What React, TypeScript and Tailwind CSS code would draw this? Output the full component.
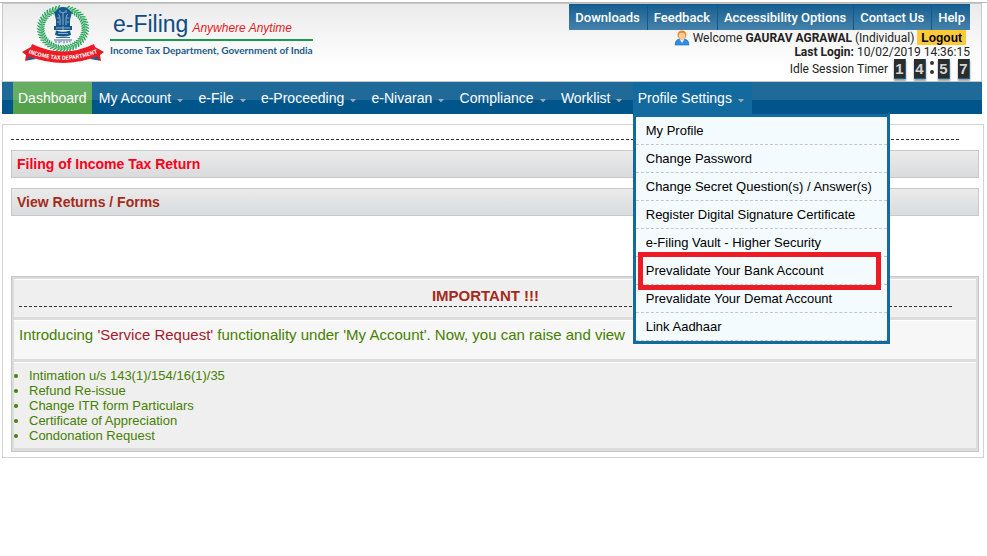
import { Fragment } from 'react'

const topLinks = ['Downloads', 'Feedback', 'Accessibility Options', 'Contact Us', 'Help']

const navItems = ['My Account', 'e-File', 'e-Proceeding', 'e-Nivaran', 'Compliance', 'Worklist']

const profileMenu = [
  { label: 'My Profile' },
  { label: 'Change Password' },
  { label: 'Change Secret Question(s) / Answer(s)' },
  { label: 'Register Digital Signature Certificate' },
  { label: 'e-Filing Vault - Higher Security' },
  { label: 'Prevalidate Your Bank Account', highlighted: true },
  { label: 'Prevalidate Your Demat Account' },
  { label: 'Link Aadhaar' },
]

const requests = [
  'Intimation u/s 143(1)/154/16(1)/35',
  'Refund Re-issue',
  'Change ITR form Particulars',
  'Certificate of Appreciation',
  'Condonation Request',
]

const notice = ['Introducing ', "'Service Request'", " functionality under 'My Account'. Now, you can raise and view"]

function Emblem() {
  // laurel leaves, placed round the ring with a gap at the top
  const leaves = Array.from({ length: 46 }, (_, i) => -78 + i * 7.5)

  return (
    <svg width="82" height="60" viewBox="0 0 82 60" aria-hidden="true">
      <g fill="none" transform="translate(41 23.5) scale(1 0.9)">
        <circle r="22" stroke="#b4dfc4" strokeWidth="5" strokeDasharray="134 5" transform="rotate(-84)" />
        {leaves.map((deg) => (
          <g key={deg} transform={`rotate(${deg})`}>
            <path d="M18.5 1.2 L21.5 -0.8" stroke="#1f9d52" strokeWidth="1.2" />
            <path d="M22.5 -1 L26 1.4" stroke="#23a057" strokeWidth="1.3" />
          </g>
        ))}
        <circle r="22" stroke="#2ba45d" strokeWidth="0.8" strokeDasharray="134 5" transform="rotate(-84)" />
      </g>
      {/* lion capital */}
      <g fill="#14578c">
        <path d="M36 4 Q38 1.5 41 2 Q44 1.5 46 4 L48 6 L50 7 L49 11 L48 15 L48 21 L34 21 L34 15 L33 11 L32 7 L34 6 Z" />
        <path d="M32 21 H50 V25 H32 Z" />
        <path d="M34 25.5 Q41 28 48 25.5 L49 30 Q41 33 33 30 Z" />
      </g>
      <g fill="none" stroke="#c3d5e3" strokeWidth="0.7">
        <path d="M38 5 V8 M44 5 V8 M36.5 9 Q38 11 38 14 V20 M45.5 9 Q44 11 44 14 V20 M41 8 V20 M39 7 Q41 9 43 7" />
        <path d="M35 13 H37 M45 13 H47 M35 17 H37 M45 17 H47" />
        <path d="M34 23 H39 M43 23 H48 M36 28.5 H46" />
        <circle cx="41" cy="23" r="1.2" />
      </g>
      <g fill="none" stroke="#3c6f95" strokeWidth="1">
        <path d="M34 32.5 H48" />
        <path d="M32 35 H50 M34 36 V38 M37 36 V38.5 M39 36 V37.5 M42 36 V38.5 M45 36 V38 M48 36 V37.5" />
      </g>
      {/* ribbon */}
      <path d="M9 42 L0 47 L4 50 L3 56 L13 53 Z M73 42 L82 47 L78 50 L79 56 L69 53 Z" fill="#e01b23" />
      <path d="M5 55.5 L8 50 L14 54 Z M77 55.5 L74 50 L68 54 Z" fill="#1c5f96" />
      <path d="M10 39 Q41 54 72 39 L76 51 Q41 65 6 51 Z" fill="#ed1c24" />
      <path id="ribbon-text" d="M5 47.5 Q41 62 77 47.5" fill="none" />
      <text fontFamily="Noto Sans CJK JP, Liberation Sans, sans-serif" fontSize="5.5" fontWeight="700" fill="#fff" textAnchor="middle">
        <textPath href="#ribbon-text" startOffset="50%">
          INCOME TAX DEPARTMENT
        </textPath>
      </text>
    </svg>
  )
}

function UserIcon() {
  return (
    <svg width="16" height="16" viewBox="0 0 16 16" aria-hidden="true">
      <path d="M1 15 Q1 10 5 9 H11 Q15 10 15 15 Z" fill="#2f8fe0" stroke="#2674bd" strokeWidth="0.7" />
      <path d="M5.5 9 L8 13 L10.5 9 Z" fill="#e8f3fc" />
      <circle cx="8" cy="5" r="4.5" fill="#e88a2c" />
      <circle cx="8" cy="6" r="3.3" fill="#f8cb9a" />
    </svg>
  )
}

function Arrow() {
  return (
    <svg width="6" height="3" viewBox="0 0 6 3" className="mt-1" aria-hidden="true">
      <path d="M0 0 H6 L3.5 3 H2.5 Z" fill="#9fa9b0" />
    </svg>
  )
}

function TimerDigit({ value }: { value: string }) {
  return (
    <span className="flex h-5 w-3 items-center justify-center border-r border-b border-[#1b6694] bg-[#2c2c2c] font-['Liberation_Sans',sans-serif] text-[15px] font-bold text-[#d4d4d4] shadow-[0_2px_2px_#999]">
      {value}
    </span>
  )
}

function Header() {
  return (
    <header className="mr-[5px] ml-[2px] flex h-[79px] justify-between border border-[#c8c8c8] bg-linear-to-b from-[#ebebeb] to-white to-80%">
      <div className="flex pt-px pl-[19px]">
        <Emblem />
        <div className="ml-[6px] pt-1">
          <div className="flex items-baseline gap-1 pl-[3px] whitespace-nowrap">
            <span className="text-[23px] leading-[30px] text-[#0f4c81]">e-Filing</span>
            <span className="text-xs text-[#e31b23] italic">Anywhere Anytime</span>
          </div>
          <div className="border-t-2 border-[#1a9a50] pt-px font-['Lato','Liberation_Sans',sans-serif] text-[10px] leading-4 font-bold whitespace-nowrap text-[#1b5a8a]">
            Income Tax Department, Government of India
          </div>
        </div>
      </div>

      <div className="flex flex-col items-end pr-[11px] font-['Roboto','Liberation_Sans',sans-serif] text-xs text-[#222]">
        <nav className="flex border-t border-[#12598b] bg-linear-to-b from-[#155f91] to-[#4482aa]" aria-label="Help links">
          {topLinks.map((link) => (
            <a key={link} href="#" className="border-r border-[#12598b] pr-[7px] pl-[6px] text-[13px] leading-[25px] font-medium text-white last:border-r-0 last:pr-[5px]">
              {link}
            </a>
          ))}
        </nav>
        <div className="flex h-[15px] items-center gap-[3px] pr-1 whitespace-nowrap">
          <UserIcon />
          <span>
            Welcome <b>GAURAV AGRAWAL</b> (Individual)
          </span>
          <button className="h-[15px] bg-[#ffc938] px-1 font-['Liberation_Sans',sans-serif] leading-4 font-bold text-black">Logout</button>
        </div>
        <div className="leading-[14px]">
          <b>Last Login:</b> 10/02/2019 14:36:15
        </div>
        <div className="flex h-5 items-center">
          <span className="mr-[6px]">Idle Session Timer</span>
          <div className="flex items-center gap-2">
            <TimerDigit value="1" />
            <TimerDigit value="4" />
            <span className="-mx-[6px] mb-1 flex w-2 flex-col items-center gap-[5px]">
              <i className="size-1 rounded-full bg-[#333]" />
              <i className="size-1 rounded-full bg-[#333]" />
            </span>
            <TimerDigit value="5" />
            <TimerDigit value="7" />
          </div>
        </div>
      </div>
    </header>
  )
}

function ProfileMenu() {
  return (
    <ul className="absolute top-full left-0 z-10 w-[257px] border-[3px] border-[#136a9e] bg-[#f3fbff]">
      {profileMenu.map((item) => (
        <li key={item.label} className="relative h-7 border-b border-dashed border-[#c6c6c6]">
          <a href="#" className="block pl-[10px] text-[13px] leading-[27px] whitespace-nowrap text-black">
            {item.label}
          </a>
          {item.highlighted && (
            <span className="pointer-events-none absolute -top-[5px] right-[6px] -bottom-[6px] left-[2px] z-10 border-[5px] border-[#ed1c24]" />
          )}
        </li>
      ))}
    </ul>
  )
}

function MainNav() {
  return (
    <nav className="mr-[5px] ml-[2px] bg-linear-to-b from-[#1f6a99] from-55% to-[#00558a] to-55% pl-[11px]" aria-label="Main">
      <ul className="flex w-[739px] justify-between text-sm leading-8 whitespace-nowrap text-white">
        <li>
          <a href="#" className="block bg-linear-to-b from-[#68ae62] from-55% to-[#54a04b] to-55% px-[5px]">
            Dashboard
          </a>
        </li>
        {navItems.map((item) => (
          <li key={item}>
            <a href="#" className="flex items-center gap-[6px] pr-2 pl-[5px]">
              {item}
              <Arrow />
            </a>
          </li>
        ))}
        <li className="relative bg-[#136a9e]">
          <a href="#" className="flex items-center gap-[6px] pr-2 pl-[5px]">
            Profile Settings
            <Arrow />
          </a>
          <ProfileMenu />
        </li>
      </ul>
    </nav>
  )
}

function SectionBar({ title, className }: { title: string; className: string }) {
  return (
    <div className="mt-[10px] border border-[#c9c9c9] bg-linear-to-b from-[#ebebec] to-[#dadbdc] pl-[5px]">
      <h2 className="text-sm leading-[26px] font-bold">
        <a href="#" className={className}>
          {title}
        </a>
      </h2>
    </div>
  )
}

export default function App() {
  return (
    <div className="min-h-screen bg-white pt-[2px] font-['Liberation_Sans',Arial,sans-serif]">
      <div className="h-px bg-[#b9b9b9]" />
      <Header />
      <MainNav />

      <main className="mt-[10px] mr-[3px] ml-[2px] border border-[#d2d2d2] pt-[14px] pr-1 pb-[5px] pl-2">
        <div className="mr-5 border-t border-dashed border-[#333]" />
        <SectionBar title="Filing of Income Tax Return" className="text-[#fb0018]" />
        <SectionBar title="View Returns / Forms" className="text-[#a52a1a]" />

        <section className="mt-[60px] flex flex-col gap-[3px] border border-[#c6c6c6] bg-[#dcdcdc] p-[2px] pb-[3px] text-[#458000]">
          <div className="h-[38px] border-t border-white bg-[#efefef] pr-6 pl-[5px]">
            <h3 className="h-[27px] border-b border-dashed border-[#333] pt-[7px] text-center text-[15px] leading-[18px] font-bold text-[#a52a1a]">
              IMPORTANT !!!
            </h3>
          </div>
          <p className="h-[39px] border-t border-white bg-[#f7f7f7] pt-1 pl-[5px] text-[15px] leading-5">
            {notice.map((part, i) => (
              <Fragment key={part}>{i === 1 ? <span className="text-[#a5192a]">{part}</span> : part}</Fragment>
            ))}
          </p>
          <ul className="list-disc border-t border-white bg-[#efefef] pt-[5px] pb-[5px] pl-[15px] text-[13px] leading-[15px]">
            {requests.map((item) => (
              <li key={item}>{item}</li>
            ))}
          </ul>
        </section>
      </main>
    </div>
  )
}
